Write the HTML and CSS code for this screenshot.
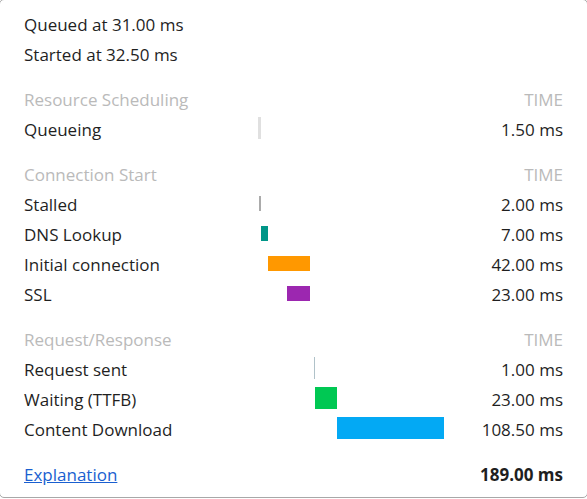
FILE: index.html
```html
<!DOCTYPE html>
<html lang="en">
<head>
<meta charset="utf-8">
<title>Timing</title>
<link rel="stylesheet" href="styles.css">
</head>
<body>
<div class="panel">
  <div class="meta">
    <div class="meta-row">Queued at 31.00 ms</div>
    <div class="meta-row">Started at 32.50 ms</div>
  </div>

  <section class="group">
    <div class="row head"><span class="label">Resource Scheduling</span><span class="bars"></span><span class="value">TIME</span></div>
    <div class="row"><span class="label">Queueing</span><span class="bars"><i class="bar tall queueing" style="margin-left:1px;width:3px"></i></span><span class="value">1.50 ms</span></div>
  </section>

  <section class="group">
    <div class="row head"><span class="label">Connection Start</span><span class="bars"></span><span class="value">TIME</span></div>
    <div class="row"><span class="label">Stalled</span><span class="bars"><i class="bar short stalled" style="margin-left:2px;width:2px"></i></span><span class="value">2.00 ms</span></div>
    <div class="row"><span class="label">DNS Lookup</span><span class="bars"><i class="bar short dns" style="margin-left:4px;width:7px"></i></span><span class="value">7.00 ms</span></div>
    <div class="row"><span class="label">Initial connection</span><span class="bars"><i class="bar short connect" style="margin-left:11px;width:42px"></i></span><span class="value">42.00 ms</span></div>
    <div class="row"><span class="label">SSL</span><span class="bars"><i class="bar short ssl" style="margin-left:30px;width:23px"></i></span><span class="value">23.00 ms</span></div>
  </section>

  <section class="group">
    <div class="row head"><span class="label">Request/Response</span><span class="bars"></span><span class="value">TIME</span></div>
    <div class="row"><span class="label">Request sent</span><span class="bars"><i class="bar tall sent" style="margin-left:57px;width:1px"></i></span><span class="value">1.00 ms</span></div>
    <div class="row"><span class="label">Waiting (TTFB)</span><span class="bars"><i class="bar tall waiting" style="margin-left:58px;width:22px"></i></span><span class="value">23.00 ms</span></div>
    <div class="row"><span class="label">Content Download</span><span class="bars"><i class="bar tall download" style="margin-left:80px;width:107px"></i></span><span class="value">108.50 ms</span></div>
  </section>

  <div class="footer">
    <a class="link" href="#">Explanation</a>
    <span class="total">189.00 ms</span>
  </div>
</div>
</body>
</html>
```

FILE: styles.css
```css
html, body {
  margin: 0;
  padding: 0;
  background: #ffffff;
  overflow: hidden;
}

body {
  font-family: "Open Sans", "Noto Sans", sans-serif;
  font-size: 17px;
  color: #1f1f1f;
}

.panel {
  box-sizing: border-box;
  margin: -1px -1px 0 -1px;
  height: 499px;
  border: 1px solid #a8a8a8;
  border-radius: 5px;
  background: #ffffff;
  padding: 10px 24px 0 24px;
}

.meta-row {
  height: 30px;
  line-height: 30px;
  white-space: nowrap;
}

.group {
  margin-top: 15px;
}

.row {
  display: grid;
  grid-template-columns: 233px 1fr auto;
  height: 30px;
  line-height: 30px;
}

.label {
  white-space: nowrap;
}

.head {
  color: #bababa;
}

.value {
  text-align: right;
  white-space: nowrap;
}

.bars {
  display: flex;
  align-items: flex-start;
}

.bar {
  display: block;
  flex: none;
}

.bar.tall {
  height: 22px;
  margin-top: 2px;
}

.bar.short {
  height: 15px;
  margin-top: 6px;
}

.queueing { background: #e0e0e0; }
.stalled { background: #ababab; }
.dns { background: #009688; }
.connect { background: #ff9800; }
.ssl { background: #9c27b0; }
.sent { background: #b0c2c9; }
.waiting { background: #00c853; }
.download { background: #03a9f4; }

.footer {
  margin-top: 15px;
  height: 30px;
  line-height: 30px;
  display: flex;
  justify-content: space-between;
}

.link {
  color: #1a5fd0;
  text-decoration: underline;
}

.total {
  font-weight: 700;
}
```
